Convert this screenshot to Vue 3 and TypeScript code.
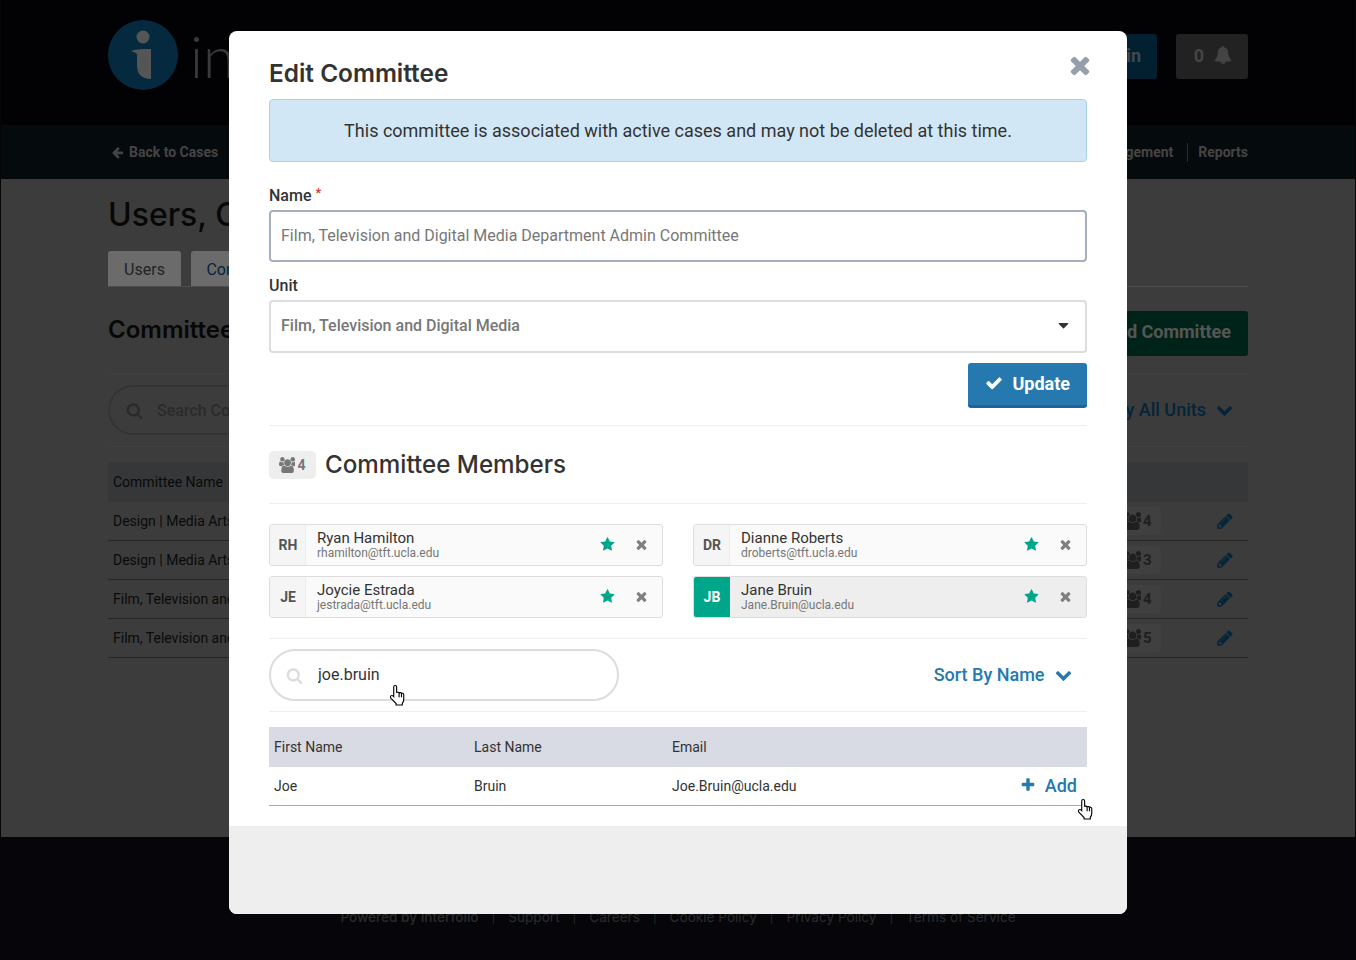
<script setup lang="ts">
import { ref } from 'vue'

const icons: Record<string, string> = {
  times: 'M1490 1322q0 40-28 68l-136 136q-28 28-68 28t-68-28l-294-294-294 294q-28 28-68 28t-68-28l-136-136q-28-28-28-68t28-68l294-294-294-294q-28-28-28-68t28-68l136-136q28-28 68-28t68 28l294 294 294-294q28-28 68-28t68 28l136 136q28 28 28 68t-28 68l-294 294 294 294q28 28 28 68z',
  star: 'M1728 647q0 22-26 48l-363 354 86 500q1 7 1 20 0 21-10.500 35.500t-30.500 14.500q-19 0-40-12l-449-236-449 236q-22 12-40 12-21 0-31.500-14.500t-10.500-35.500q0-6 2-20l86-500-364-354q-25-27-25-48 0-37 56-46l502-73 225-455q19-41 49-41t49 41l225 455 502 73q56 9 56 46z',
  check: 'M1671 566q0 40-28 68l-724 724-136 136q-28 28-68 28t-68-28l-136-136-362-362q-28-28-28-68t28-68l136-136q28-28 68-28t68 28l294 295 656-657q28-28 68-28t68 28l136 136q28 28 28 68z',
  chevron: 'M1683 808l-742 741q-19 19-45 19t-45-19l-742-741q-19-19-19-45.500t19-45.500l166-165q19-19 45-19t45 19l531 531 531-531q19-19 45-19t45 19l166 165q19 19 19 45.500t-19 45.500z',
  plus: 'M1600 736v192q0 40-28 68t-68 28h-416v416q0 40-28 68t-68 28h-192q-40 0-68-28t-28-68v-416h-416q-40 0-68-28t-28-68v-192q0-40 28-68t68-28h416v-416q0-40 28-68t68-28h192q40 0 68 28t28 68v416h416q40 0 68 28t28 68z',
  search: 'M1216 832q0-185-131.500-316.500t-316.500-131.500-316.500 131.500-131.500 316.500 131.500 316.500 316.500 131.500 316.500-131.500 131.500-316.500zm512 832q0 52-38 90t-90 38q-54 0-90-38l-343-342q-179 124-399 124-143 0-273.500-55.500t-225-150-150-225-55.500-273.500 55.500-273.500 150-225 225-150 273.500-55.500 273.500 55.500 225 150 150 225 55.500 273.500q0 220-124 399l343 343q37 37 37 90z',
  users: 'M593 896q-162 5-265 128h-134q-82 0-138-40.500t-56-118.500q0-353 124-353 6 0 43.500 21t97.500 42.500 119 21.500q67 0 133-23-5 37-5 66 0 139 81 256zm1071 637q0 120-73 189.500t-194 69.500h-874q-121 0-194-69.500t-73-189.500q0-53 3.500-103.500t14-109 26.500-108.500 43-97.500 62-81 85.500-53.500 111.500-20q10 0 43 21.500t73 48 107 48 135 21.500 135-21.500 107-48 73-48 43-21.500q61 0 111.500 20t85.500 53.500 62 81 43 97.500 26.500 108.500 14 109 3.500 103.500zm-1024-1277q0 106-75 181t-181 75-181-75-75-181 75-181 181-75 181 75 75 181zm704 384q0 159-112.500 271.500t-271.500 112.500-271.500-112.500-112.500-271.500 112.500-271.500 271.500-112.500 271.500 112.500 112.500 271.500zm576 225q0 78-56 118.500t-138 40.500h-134q-103-123-265-128 81-117 81-256 0-29-5-66 66 23 133 23 59 0 119-21.500t97.500-42.500 43.500-21q124 0 124 353zm-128-609q0 106-75 181t-181 75-181-75-75-181 75-181 181-75 181 75 75 181z',
  pencil: 'M491 1536l91-91-235-235-91 91v107h128v128h107zm523-928q0-22-22-22-10 0-17 7l-542 542q-7 7-7 17 0 22 22 22 10 0 17-7l542-542q7-7 7-17zm-54-192l416 416-832 832h-416v-416zm683 96q0 53-37 90l-166 166-416-416 166-165q36-38 90-38 53 0 91 38l235 234q37 39 37 91z',
  bell: 'M912 1696q0-16-16-16-59 0-101.500-42.500t-42.500-101.500q0-16-16-16t-16 16q0 73 51.500 124.500t124.500 51.500q16 0 16-16zm816-288q0 52-38 90t-90 38h-448q0 106-75 181t-181 75-181-75-75-181h-448q-52 0-90-38t-38-90q50-42 91-88t85-119.500 74.500-158.500 50-206 19.500-260q0-152 117-282.500t307-158.500q-8-19-8-39 0-40 28-68t68-28 68 28 28 68q0 20-8 39 190 28 307 158.500t117 282.500q0 139 19.500 260t50 206 74.500 158.500 85 119.500 91 88z',
  back: 'M1664 896v128q0 53-32.500 90.500t-84.500 37.500h-704l293 294q38 36 38 90t-38 90l-75 76q-37 37-90 37-52 0-91-37l-651-652q-37-37-37-90 0-52 37-91l651-650q38-38 91-38 52 0 90 38l75 74q38 38 38 91t-38 91l-293 293h704q52 0 84.500 37.500t32.500 90.500z',
  caret: 'M1408 704q0 26-19 45l-448 448q-19 19-45 19t-45-19l-448-448q-19-19-19-45t19-45 45-19h896q26 0 45 19t19 45z'
}

// mouse pointer left in the screenshot
const handPath = 'M5.5 1.2c.8 0 1.3.6 1.3 1.4v5c.2-.6 1.9-.7 2.2.2.4-.5 1.8-.5 2.1.4.5-.4 1.9-.2 2 1v4.300c0 1.500-.6 2.600-1.300 3.600v1.400H6.300v-1.300L1.800 12.600c-.7-.8-.7-1.700-.1-2.200.6-.5 1.500-.3 2.100.3l.4.400V2.600c0-.8.600-1.400 1.300-1.400zM9 8v3.500M11.100 8.600v2.900M13.100 9.300v2.200'

const bgRows = [
  { name: 'Design | Media Arts Department Admin Committee', count: 4 },
  { name: 'Design | Media Arts Faculty Committee', count: 3 },
  { name: 'Film, Television and Digital Media Committee', count: 4 },
  { name: 'Film, Television and Digital Media Faculty', count: 5 }
]

const footerLinks = ['Support', 'Careers', 'Cookie Policy', 'Privacy Policy', 'Terms of Service']

const members = [
  { initials: 'RH', name: 'Ryan Hamilton', email: 'rhamilton@tft.ucla.edu', isNew: false },
  { initials: 'DR', name: 'Dianne Roberts', email: 'droberts@tft.ucla.edu', isNew: false },
  { initials: 'JE', name: 'Joycie Estrada', email: 'jestrada@tft.ucla.edu', isNew: false },
  { initials: 'JB', name: 'Jane Bruin', email: 'Jane.Bruin@ucla.edu', isNew: true }
]

const committeeName = ref('Film, Television and Digital Media Department Admin Committee')
const search = ref('joe.bruin')
</script>

<template>
  <div class="page">
    <header class="top">
      <div class="wrap top-inner">
        <div class="logo">
          <svg class="logo-mark" viewBox="0 0 70 70">
            <circle cx="35" cy="35" r="35" fill="#0c6498" />
            <circle cx="35" cy="17" r="6.500" fill="#cacaca" />
            <path d="M23 31c5-2 14-2 20-2v30c-9 0-14-5-14-13V35c0-2-3-3-6-4z" fill="#cacaca" />
          </svg>
          <span class="logo-text">interfolio</span>
        </div>
        <div class="top-actions">
          <button class="admin-btn">Admin</button>
          <button class="bell-btn">
            <span>0</span>
            <svg class="ic" viewBox="0 0 1792 1792"><path :d="icons.bell" /></svg>
          </button>
        </div>
      </div>
    </header>

    <nav class="nav">
      <div class="wrap nav-inner">
        <a class="nav-link">
          <svg class="ic" viewBox="0 0 1792 1792"><path :d="icons.back" /></svg>
          Back to Cases
        </a>
        <div class="nav-right">
          <a class="nav-link">Case Management</a>
          <a class="nav-link sep">Reports</a>
        </div>
      </div>
    </nav>

    <main class="content">
      <div class="wrap">
        <h1 class="bg-title">Users, Committees</h1>
        <div class="tabs">
          <span class="tab">Users</span>
          <span class="tab link">Committees</span>
        </div>
        <div class="bg-head">
          <h2>Committees</h2>
          <button class="add-btn">Add Committee</button>
        </div>
        <div class="bg-filter">
          <div class="bg-search">
            <svg class="ic" viewBox="0 0 1792 1792"><path :d="icons.search" /></svg>
            <span>Search Committees</span>
          </div>
          <span class="bg-sort">
            Filter By All Units
            <svg class="ic" viewBox="0 0 1792 1792"><path :d="icons.chevron" /></svg>
          </span>
        </div>
        <div class="bg-thead">Committee Name</div>
        <div v-for="row in bgRows" :key="row.name" class="bg-row">
          <span class="bg-name">{{ row.name }}</span>
          <span class="bg-count">
            <svg class="ic" viewBox="0 0 1792 1792"><path :d="icons.users" /></svg>
            {{ row.count }}
          </span>
          <svg class="ic bg-edit" viewBox="0 0 1792 1792"><path :d="icons.pencil" /></svg>
        </div>
      </div>
    </main>

    <footer class="foot">
      <b>Powered by Interfolio</b>
      <template v-for="link in footerLinks" :key="link">
        <i>|</i><span>{{ link }}</span>
      </template>
    </footer>

    <div class="backdrop">
      <section class="modal">
        <div class="modal-body">
          <div class="modal-head">
            <h3>Edit Committee</h3>
            <svg class="close" viewBox="0 0 1792 1792"><path :d="icons.times" /></svg>
          </div>

          <div class="alert">This committee is associated with active cases and may not be deleted at this time.</div>

          <label class="field-label name-label">Name <sup>*</sup></label>
          <input v-model="committeeName" class="text-input" type="text" />

          <label class="field-label unit-label">Unit</label>
          <div class="select">
            <span>Film, Television and Digital Media</span>
            <svg class="ic" viewBox="0 0 1792 1792"><path :d="icons.caret" /></svg>
          </div>

          <div class="form-actions">
            <button class="update-btn">
              <svg class="ic" viewBox="0 0 1792 1792"><path :d="icons.check" /></svg>
              Update
            </button>
          </div>

          <div class="members-head">
            <span class="count-badge">
              <svg class="ic" viewBox="0 0 1792 1792"><path :d="icons.users" /></svg>
              4
            </span>
            <h4>Committee Members</h4>
          </div>

          <div class="members">
            <div v-for="m in members" :key="m.initials" :class="['member', { fresh: m.isNew }]">
              <span class="initials">{{ m.initials }}</span>
              <div class="who">
                <div class="who-name">{{ m.name }}</div>
                <div class="who-email">{{ m.email }}</div>
              </div>
              <svg class="ic star" viewBox="0 0 1792 1792"><path :d="icons.star" /></svg>
              <svg class="ic remove" viewBox="0 0 1792 1792"><path :d="icons.times" /></svg>
            </div>
          </div>

          <div class="search-row">
            <div class="search">
              <svg class="ic" viewBox="0 0 1792 1792"><path :d="icons.search" /></svg>
              <input v-model="search" type="text" />
              <svg class="hand hand-search" viewBox="0 0 16 21"><path :d="handPath" /></svg>
            </div>
            <span class="sort">
              Sort By Name
              <svg class="ic" viewBox="0 0 1792 1792"><path :d="icons.chevron" /></svg>
            </span>
          </div>

          <div class="results">
            <div class="results-row results-head">
              <span>First Name</span><span>Last Name</span><span>Email</span><span></span>
            </div>
            <div class="results-row results-item">
              <span>Joe</span><span>Bruin</span><span>Joe.Bruin@ucla.edu</span>
              <a class="add-link">
                <svg class="ic" viewBox="0 0 1792 1792"><path :d="icons.plus" /></svg>
                Add
              </a>
              <svg class="hand hand-add" viewBox="0 0 16 21"><path :d="handPath" /></svg>
            </div>
          </div>
        </div>
        <div class="modal-foot"></div>
      </section>
    </div>
  </div>
</template>

<style>
html,
body {
  margin: 0;
  background: #000;
}
</style>

<style scoped>
.page {
  position: relative;
  display: flex;
  flex-direction: column;
  height: 960px;
  box-sizing: border-box;
  border-left: 1px solid #050505;
  border-right: 1px solid #050505;
  overflow: hidden;
  font-family: Roboto, 'Liberation Sans', sans-serif;
  color: #181818;
}

.wrap {
  width: 1140px;
  margin: 0 auto;
}

.ic {
  display: block;
  fill: currentColor;
  flex: none;
}

/* page behind the dialog */
.top {
  height: 125px;
  background: #05070c;
}

.top-inner {
  display: flex;
  justify-content: space-between;
  padding-top: 20px;
}

.logo {
  display: flex;
  align-items: center;
  gap: 12px;
  height: 70px;
}

.logo-mark {
  width: 70px;
  height: 70px;
}

.logo-text {
  font-family: Lato, sans-serif;
  font-weight: 300;
  font-size: 58px;
  color: #8a8a8a;
}

.top-actions {
  display: flex;
  gap: 19px;
  padding-top: 14px;
}

.top-actions button {
  height: 45px;
  border: none;
  border-radius: 3px;
  font-family: inherit;
  font-size: 18px;
  font-weight: 700;
}

.admin-btn {
  width: 100px;
  padding: 0 16px 3px 0;
  text-align: right;
  background: #054c70;
  color: #8fb0c0;
}

.bell-btn {
  display: flex;
  align-items: center;
  justify-content: center;
  gap: 10px;
  width: 72px;
  padding: 0 0 3px 2px;
  background: #515151;
  color: #a2a2a2;
}

.bell-btn .ic {
  width: 18px;
  height: 18px;
}

.nav {
  height: 54px;
  background: #0c1821;
}

.nav-inner {
  display: flex;
  justify-content: space-between;
  align-items: center;
  height: 54px;
}

.nav-link {
  display: flex;
  align-items: center;
  gap: 5px;
  font-size: 14px;
  font-weight: 700;
  color: #a2a2a2;
}

.nav-inner > .nav-link {
  padding-left: 3px;
}

.nav-link .ic {
  width: 13px;
  height: 13px;
}

.nav-right {
  display: flex;
}

.nav-link.sep {
  margin-left: 14px;
  padding-left: 10px;
  border-left: 1px solid #666;
  line-height: 19px;
}

.content {
  flex: 1;
  background: #8f8f8f;
}

.bg-title {
  margin: 0;
  padding-top: 16px;
  font-family: Inter, sans-serif;
  font-size: 32px;
  font-weight: 500;
  line-height: 40px;
  color: #111;
}

.tabs {
  display: flex;
  gap: 10px;
  margin-top: 16px;
  border-bottom: 1px solid #b8b8b8;
}

.tab {
  width: 73px;
  height: 35px;
  border-radius: 3px 3px 0 0;
  background: #fff;
  text-align: center;
  font-size: 16px;
  line-height: 37px;
  color: #555;
}

.tab.link {
  width: 118px;
  color: #0a5688;
}

.bg-head {
  display: flex;
  justify-content: space-between;
  align-items: center;
  height: 86px;
  border-bottom: 1px solid #999;
}

.bg-head h2 {
  margin: 0 0 2px;
  font-family: Inter, sans-serif;
  font-size: 24px;
  font-weight: 600;
  color: #111;
}

.add-btn {
  height: 45px;
  margin-top: 6px;
  padding: 0 17px 4px;
  border: none;
  border-radius: 3px;
  background: #00533c;
  color: #cacaca;
  font-family: inherit;
  font-size: 18px;
  font-weight: 700;
}

.bg-filter {
  display: flex;
  justify-content: space-between;
  align-items: center;
  height: 72px;
  border-bottom: 1px solid #999;
}

.bg-search {
  display: flex;
  align-items: center;
  gap: 14px;
  width: 350px;
  height: 50px;
  padding-left: 16px;
  border: 2px solid #7c7c7c;
  border-radius: 26px;
  box-sizing: border-box;
  font-size: 16px;
  font-weight: 500;
  color: #666;
}

.bg-search .ic {
  width: 17px;
  height: 17px;
}

.bg-sort {
  display: flex;
  align-items: center;
  gap: 10px;
  padding: 0 15px 1px 0;
  font-size: 18px;
  font-weight: 500;
  color: #0a5688;
}

.bg-sort .ic {
  width: 17px;
  height: 17px;
}

.bg-thead {
  height: 40px;
  margin-top: 15px;
  padding-left: 5px;
  background: #828387;
  font-size: 14px;
  line-height: 40px;
}

.bg-row {
  display: flex;
  align-items: center;
  height: 38px;
  padding-left: 5px;
  border-bottom: 1px solid #5a5a5a;
  font-size: 14px;
}

.bg-name {
  width: 1005px;
  white-space: nowrap;
}

.bg-count {
  display: flex;
  align-items: center;
  gap: 2px;
  height: 28px;
  padding: 0 9px 0 5px;
  border-radius: 5px;
  background: #989898;
  font-size: 15px;
  font-weight: 700;
  color: #4a4a4a;
}

.bg-count .ic {
  width: 18px;
  height: 18px;
}

.bg-edit {
  width: 18px;
  height: 18px;
  margin-left: 55px;
  color: #0a5688;
}

.foot {
  display: flex;
  justify-content: center;
  align-items: baseline;
  gap: 13px;
  height: 123px;
  padding-top: 72px;
  box-sizing: border-box;
  background: #0c0e18;
  font-family: Inter, sans-serif;
  font-size: 13.600px;
  color: #666;
}

.foot b {
  font-weight: 500;
}

.foot i {
  font-style: normal;
  font-size: 11px;
}

/* dialog */
.backdrop {
  position: absolute;
  inset: 0;
  display: flex;
  justify-content: center;
  padding-top: 31px;
  background: rgba(0, 0, 0, 0.58);
}

.modal {
  width: 898px;
  height: 883px;
  border-radius: 8px;
  overflow: hidden;
  background: #fff;
  color: #333;
}

.modal-body {
  height: 795px;
  padding: 0 40px;
  box-sizing: border-box;
}

.modal-foot {
  height: 88px;
  background: #eee;
}

.modal-head {
  display: flex;
  justify-content: space-between;
  height: 68px;
}

.modal-head h3 {
  margin: 0;
  padding-top: 27px;
  font-family: Inter, sans-serif;
  font-size: 24.400px;
  font-weight: 600;
  line-height: 30px;
}

.close {
  width: 28px;
  height: 28px;
  margin: 20px -7px 0 0;
  fill: #969eab;
}

.alert {
  height: 63px;
  box-sizing: border-box;
  border: 1px solid #a9d2ea;
  border-radius: 4px;
  background: #d2e7f5;
  text-align: center;
  font-size: 18px;
  line-height: 61px;
}

.field-label {
  display: block;
  font-size: 16px;
  font-weight: 500;
  line-height: 20px;
}

.field-label sup {
  color: #d9342b;
  font-size: 13px;
  line-height: 0;
  vertical-align: 4px;
}

.name-label {
  margin-top: 24px;
  height: 24px;
}

.unit-label {
  margin-top: 14px;
  height: 24px;
}

.text-input {
  display: block;
  width: 100%;
  height: 52px;
  padding: 0 10px 2px;
  box-sizing: border-box;
  border: 2px solid #a4afc0;
  border-radius: 4px;
  outline: none;
  font-family: inherit;
  font-size: 16px;
  color: #777;
}

.select {
  display: flex;
  justify-content: space-between;
  align-items: center;
  height: 53px;
  padding: 0 13px 2px 10px;
  box-sizing: border-box;
  border: 2px solid #ddd;
  border-radius: 4px;
  font-size: 16px;
  font-weight: 500;
  color: #777;
}

.select .ic {
  width: 17px;
  height: 17px;
  color: #333;
}

.form-actions {
  display: flex;
  justify-content: flex-end;
  padding: 10px 0 17px;
  border-bottom: 1px solid #eee;
}

.update-btn {
  display: flex;
  align-items: center;
  gap: 9px;
  height: 45px;
  padding: 0 17px 2px;
  border: none;
  border-bottom: 3px solid #1b659a;
  border-radius: 3px;
  background: #2579ae;
  color: #fff;
  font-family: inherit;
  font-size: 18px;
  font-weight: 700;
}

.update-btn .ic {
  width: 18px;
  height: 18px;
}

.members-head {
  display: flex;
  align-items: center;
  gap: 9px;
  height: 77px;
  border-bottom: 1px solid #eee;
}

.count-badge {
  display: flex;
  align-items: center;
  justify-content: center;
  gap: 2px;
  width: 47px;
  height: 28px;
  border-radius: 5px;
  background: #eee;
  font-size: 14px;
  font-weight: 700;
  color: #777;
}

.count-badge .ic {
  width: 16px;
  height: 16px;
}

.members-head h4 {
  margin: 0;
  font-family: Inter, sans-serif;
  font-size: 24.200px;
  font-weight: 500;
  color: #333;
}

.members {
  display: grid;
  grid-template-columns: 394px 394px;
  gap: 10px 30px;
  padding: 20px 0;
  border-bottom: 1px solid #eee;
}

.member {
  display: flex;
  align-items: center;
  height: 42px;
  box-sizing: border-box;
  border: 1px solid #ddd;
  border-radius: 3px;
  background: #fafafa;
  overflow: hidden;
}

.member.fresh {
  background: #eee;
}

.initials {
  flex: none;
  width: 36px;
  height: 100%;
  padding-left: 1px;
  box-sizing: border-box;
  border-right: 1px solid #eee;
  background: #f5f5f5;
  text-align: center;
  font-size: 14px;
  font-weight: 700;
  line-height: 40px;
  color: #555;
}

.member.fresh .initials {
  padding-left: 0;
  border-right: none;
  background: #00a68a;
  color: #fff;
}

.who {
  flex: 1;
  padding-left: 11px;
}

.who-name {
  padding-top: 1px;
  font-size: 15px;
  line-height: 15px;
  color: #333;
}

.who-email {
  font-size: 12px;
  line-height: 14px;
  color: #777;
}

.star {
  width: 15px;
  height: 15px;
  margin-bottom: 2px;
  color: #00a68a;
}

.remove {
  width: 15px;
  height: 15px;
  margin: 0 13.500px 1px 19px;
  color: #808080;
}

.search-row {
  display: flex;
  justify-content: space-between;
  align-items: center;
  height: 72px;
  border-bottom: 1px solid #eee;
}

.search {
  position: relative;
  display: flex;
  align-items: center;
  width: 350px;
  height: 52px;
  padding-left: 15px;
  box-sizing: border-box;
  border: 2px solid #ddd;
  border-radius: 26px;
}

.search .ic {
  width: 17px;
  height: 17px;
  color: #ddd;
}

.search input {
  flex: 1;
  min-width: 0;
  margin: 0 20px 0 13px;
  padding-bottom: 3px;
  border: none;
  outline: none;
  font-family: inherit;
  font-size: 16px;
  color: #333;
}

.sort {
  display: flex;
  align-items: center;
  gap: 10px;
  padding: 0 15.500px 2px 0;
  font-size: 18px;
  font-weight: 500;
  color: #2579ae;
}

.sort .ic {
  width: 17px;
  height: 17px;
}

.results {
  margin-top: 15px;
}

.results-row {
  position: relative;
  display: grid;
  grid-template-columns: 200px 198px 1fr auto;
  align-items: center;
  padding: 0 10px 0 5px;
  font-size: 14px;
}

.results-head {
  height: 40px;
  background: #d8dbe3;
}

.results-item {
  height: 39px;
  box-sizing: border-box;
  border-bottom: 1px solid #aaa;
}

.add-link {
  display: flex;
  align-items: center;
  gap: 9px;
  padding-bottom: 2px;
  font-size: 18px;
  font-weight: 500;
  color: #2579ae;
}

.add-link .ic {
  width: 16px;
  height: 16px;
}

.hand {
  position: absolute;
  width: 18px;
  height: 24px;
  fill: #fff;
  stroke: #000;
  stroke-width: 1;
}

.hand-search {
  left: 118px;
  top: 33px;
}

.hand-add {
  right: -8px;
  top: 31px;
}
</style>
